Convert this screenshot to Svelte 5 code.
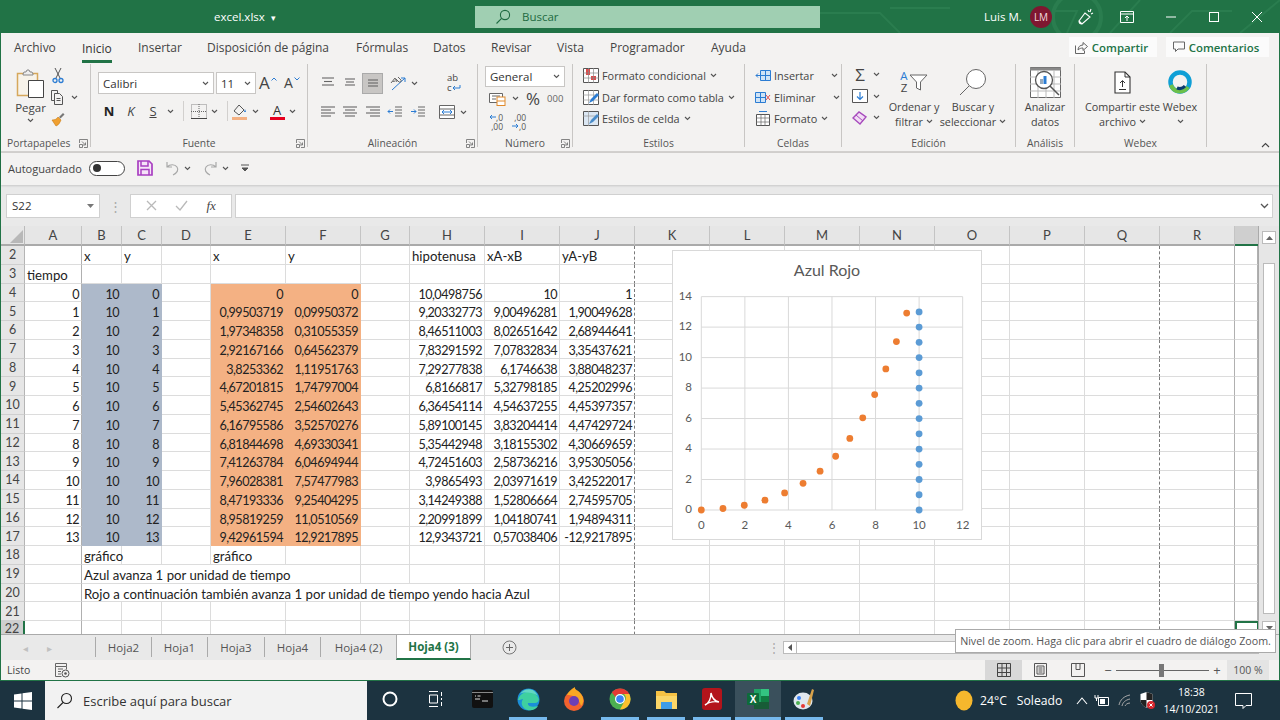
<script>
  const tabs = [['Archivo',68],['Inicio',56],['Insertar',69],['Disposición de página',149],['Fórmulas',77],['Datos',58],['Revisar',66],['Vista',53],['Programador',101],['Ayuda',60]];
  const cols = [['A',57],['B',40],['C',40],['D',49],['E',75],['F',75],['G',49],['H',75],['I',75],['J',75],['K',75],['L',75],['M',75],['N',75],['O',75],['P',75],['Q',75],['R',75],['S',23]];
  const tpl = '24px ' + cols.map(c => c[1] + 'px').join(' ');
  const num = [
    ['0','10','0','0','0','10,0498756','10','1'],
    ['1','10','1','0,99503719','0,09950372','9,20332773','9,00496281','1,90049628'],
    ['2','10','2','1,97348358','0,31055359','8,46511003','8,02651642','2,68944641'],
    ['3','10','3','2,92167166','0,64562379','7,83291592','7,07832834','3,35437621'],
    ['4','10','4','3,8253362','1,11951763','7,29277838','6,1746638','3,88048237'],
    ['5','10','5','4,67201815','1,74797004','6,8166817','5,32798185','4,25202996'],
    ['6','10','6','5,45362745','2,54602643','6,36454114','4,54637255','4,45397357'],
    ['7','10','7','6,16795586','3,52570276','5,89100145','3,83204414','4,47429724'],
    ['8','10','8','6,81844698','4,69330341','5,35442948','3,18155302','4,30669659'],
    ['9','10','9','7,41263784','6,04694944','4,72451603','2,58736216','3,95305056'],
    ['10','10','10','7,96028381','7,57477983','3,9865493','2,03971619','3,42522017'],
    ['11','10','11','8,47193336','9,25404295','3,14249388','1,52806664','2,74595705'],
    ['12','10','12','8,95819259','11,0510569','2,20991899','1,04180741','1,94894311'],
    ['13','10','13','9,42961594','12,9217895','12,9343721','0,57038406','-12,9217895']
  ];
  const numCols = ['A','B','C','E','F','H','I','J'];
  const text = {
    2: {B:'x',C:'y',E:'x',F:'y',H:'hipotenusa',I:'xA-xB',J:'yA-yB'},
    3: {A:'tiempo'},
    18: {B:'gráfico',E:'gráfico'},
    19: {B:'Azul avanza 1 por unidad de tiempo'},
    20: {B:'Rojo a continuación también avanza 1 por unidad de tiempo yendo hacia Azul'}
  };
  const spans = {19:{B:5},20:{B:8}};
  const rows = [];
  for (let r = 2; r <= 22; r++) {
    const cells = [];
    let skip = 0;
    for (const [c] of cols) {
      if (skip > 0) { skip--; continue; }
      let val = '', right = false, fill = '';
      if (r >= 4 && r <= 17) {
        const i = numCols.indexOf(c);
        if (i >= 0) { val = num[r-4][i]; right = true; }
        if (c === 'B' || c === 'C') fill = 'fb';
        if (c === 'E' || c === 'F') fill = 'fo';
      } else if (text[r] && text[r][c]) val = text[r][c];
      const span = (spans[r] && spans[r][c]) || 1;
      skip = span - 1;
      const last = cols[cols.findIndex(x => x[0] === c) + span - 1][0];
      cells.push({ c, val, right, fill, span, last });
    }
    rows.push({ r, cells });
  }
  const px = x => 29.3 + x * 21.78;
  const py = y => 260 - y * 15.24;
  const grid = { xs: [0,2,4,6,8,10,12], ys: [0,2,4,6,8,10,12,14] };
  const blueDots = Array.from({length:14}, (_, i) => [10, i]);
  const orangeDots = num.map(n => [parseFloat(n[3].replace(',','.')), parseFloat(n[4].replace(',','.'))]);
  const alignTop = [[[2,14,3],[4,12,6.5],[2,14,10]],[[3,13,4],[4,12,7],[3,13,10]],[[3,13,5],[3,13,8],[3,13,11]]];
  const alignBot = [[[1,15,3],[1,11,6],[1,15,9],[1,11,12]],[[1,15,3],[3,13,6],[1,15,9],[3,13,12]],[[1,15,3],[5,15,6],[1,15,9],[5,15,12]]];
  const sheets = [['Hoja2',56],['Hoja1',56],['Hoja3',57],['Hoja4',56],['Hoja4 (2)',76]];
</script>

{#snippet chev()}
  <svg class="chev" width="7" height="5" viewBox="0 0 7 5"><path d="M1 1l2.5 2.5L6 1" fill="none" stroke="#555" stroke-width="1.1"/></svg>
{/snippet}
{#snippet launch()}
  <svg class="launch" width="9" height="9" viewBox="0 0 9 9"><path d="M.5 4V.5h8v8H5M.5 5.5h3v3h-3zM3 2.500l3.500 3.500M6.500 3.500V6H4" fill="none" stroke="#777" stroke-width=".9"/></svg>
{/snippet}
{#snippet lines(r)}
  <svg width="16" height="16" viewBox="0 0 16 16">{#each r as l}<path d="M{l[0]} {l[2]}H{l[1]}" stroke="#666" stroke-width="1.1"/>{/each}</svg>
{/snippet}

<div class="page">
  <header class="title">
    <svg class="deco" width="460" height="33" viewBox="0 0 460 33" aria-hidden="true"><g fill="none" stroke="#2a7d4f" stroke-width="2"><circle cx="257" cy="17" r="24" stroke-width="4"/><path d="M235 11h22l-10 22M0 13h60l20 20M70 8h60M290 33l30-33M350 33l22-22h40M420 33l40-33"/></g></svg>
    <div class="fname">excel.xlsx <span class="caret">▾</span></div>
    <div class="search">
      <svg width="16" height="16" viewBox="0 0 16 16"><circle cx="10" cy="6" r="4.6" fill="none" stroke="#1e6a41" stroke-width="1.1"/><path d="M6.6 9.4L1.5 14.5" stroke="#1e6a41" stroke-width="1.1"/></svg>
      <span>Buscar</span>
    </div>
    <div class="user">Luis M.</div>
    <div class="avatar">LM</div>
    <svg class="pen" width="18" height="18" viewBox="0 0 18 18"><path d="M5 16l-3-3 6-8 5 4zM11 2l1 2M14 1l-1 3M16 5l-2 1M2 13c0 2 1 3 3 3" fill="none" stroke="#fff" stroke-width="1.1"/></svg>
    <svg class="rdo" width="14" height="12" viewBox="0 0 14 12"><path d="M.5.5h13v11H.5zM.5 3h13M7 10V5M5 7l2-2 2 2" fill="none" stroke="#fff"/></svg>
    <div class="wc"><svg width="12" height="12" viewBox="0 0 12 12"><path d="M1 6h10" stroke="#fff"/></svg></div>
    <div class="wc"><svg width="12" height="12" viewBox="0 0 12 12"><rect x="1.5" y="1.5" width="9" height="9" fill="none" stroke="#fff"/></svg></div>
    <div class="wc"><svg width="12" height="12" viewBox="0 0 12 12"><path d="M1 1l10 10M11 1L1 11" stroke="#fff"/></svg></div>
  </header>

  <div class="win">
    <nav class="tabs">
      {#each tabs as t, i}
        <div class="tab" class:on={i === 1} style:width="{t[1]}px"><span>{t[0]}</span></div>
      {/each}
      <button class="cbtn share"><svg width="13" height="13" viewBox="0 0 13 13"><path d="M.5 4.500v8h9v-3M3 9c0-3 2-5 5-5V1.500l4.500 4-4.500 4V7C6 7 4.500 7.500 3 9z" fill="none" stroke="#666"/></svg>Compartir</button>
      <button class="cbtn comm"><svg width="12" height="12" viewBox="0 0 12 12"><path d="M.5 1h11v7H5L2.500 10.500V8h-2z" fill="none" stroke="#666"/></svg>Comentarios</button>
    </nav>

    <section class="ribbon">
      <div class="g g1">
        <div class="gb clip">
          <div class="paste">
            <svg width="30" height="30" viewBox="0 0 30 30"><path d="M1.500 5.500h20v22h-20z" fill="#f7f3ea" stroke="#d6a85c" stroke-width="1.500"/><path d="M7 6l1-2h2l1-2h2l1 2h2l1 2v1H7z" fill="#eee" stroke="#888"/><path d="M12.500 12.500h15v17h-15z" fill="#fff" stroke="#444"/></svg>
            <span>Pegar</span>{@render chev()}
          </div>
          <div class="cliptools">
            <div class="ct"><svg width="12" height="17" viewBox="0 0 12 17"><path d="M3 1l5 10M9 1L4 11" stroke="#555"/><circle cx="3" cy="13.500" r="2" fill="none" stroke="#2b7cd3" stroke-width="1.300"/><circle cx="9" cy="13.500" r="2" fill="none" stroke="#2b7cd3" stroke-width="1.300"/></svg></div>
            <div class="ct"><svg width="16" height="16" viewBox="0 0 16 16"><path d="M4.500 11.500h-3v-10h6v3M4.500 4.500h5l3 3v8h-8zM6.500 9.500h4M6.500 11.500h4" fill="none" stroke="#555"/></svg><span class="sp"></span>{@render chev()}</div>
            <div class="ct"><svg width="16" height="16" viewBox="0 0 16 16"><path d="M9 6l4-4 1.500 1.500-4 4z" fill="#777"/><path d="M2 9c3 0 5-1 6-3l3 3c-1 2-2 5-5 6z" fill="#f0a030" stroke="#c77a10" stroke-width=".6"/></svg></div>
          </div>
        </div>
        <div class="gl"><span>Portapapeles</span>{@render launch()}</div>
      </div>

      <div class="g g2">
        <div class="gb col font">
          <div class="frow">
            <div class="combo w116"><span>Calibri</span>{@render chev()}</div>
            <div class="combo w40"><span>11</span>{@render chev()}</div>
            <div class="bigA"><span class="a1">A</span><svg class="car" width="6" height="4" viewBox="0 0 6 4"><path d="M.5 3.500L3 1l2.500 2.500" fill="none" stroke="#2b7cd3"/></svg></div>
            <div class="bigA"><span class="a2">A</span><svg class="car" width="6" height="4" viewBox="0 0 6 4"><path d="M.5.500L3 3 5.500.5" fill="none" stroke="#2b7cd3"/></svg></div>
          </div>
          <div class="frow r2">
            <b class="N">N</b><i class="K">K</i><u class="S">S</u>{@render chev()}
            <span class="vs a"></span>
            <svg class="bord" width="16" height="15" viewBox="0 0 16 15"><path d="M.5.5h15v14H.5z" fill="none" stroke="#888" stroke-dasharray="1 1"/><path d="M8 0v15M0 7.500h16" stroke="#666" stroke-dasharray="1 1"/><path d="M0 14.500h16" stroke="#444"/></svg>
            {@render chev()}
            <span class="vs b"></span>
            <svg class="fillc" width="16" height="17" viewBox="0 0 16 17"><path d="M2 8l5-6 5 5-5 5z" fill="none" stroke="#555"/><path d="M13 6l1 3h-2z" fill="#2b7cd3"/><path d="M0 14h15v3H0z" fill="#f4b183"/></svg>
            {@render chev()}
            <div class="redA"><span>A</span><i></i></div>
            {@render chev()}
          </div>
        </div>
        <div class="gl"><span>Fuente</span>{@render launch()}</div>
      </div>

      <div class="g g3">
        <div class="gb align">
          <div class="alcol">
            <div class="alrow">
              {#each alignTop as r, i}<div class="alb" class:sel={i === 2}>{@render lines(r)}</div>{/each}
              <svg class="orient" width="18" height="16" viewBox="0 0 18 16"><path d="M2 15L15 3M15 3h-4M15 3v4" stroke="#2b7cd3" fill="none"/><path d="M1 8l4-5 2 4M2.500 6.500l3-.5M8 2l3 3c1 1-1 3-2 2L6 4" fill="none" stroke="#666"/></svg>
              {@render chev()}
            </div>
            <div class="alrow">
              {#each alignBot as r}<div class="alb">{@render lines(r)}</div>{/each}
              <div class="alb"><svg width="16" height="16" viewBox="0 0 16 16"><path d="M8 3h7M8 6h7M8 9h7M8 12h7" stroke="#666"/><path d="M6 7.500H1M3 5.500l-2 2 2 2" stroke="#2b7cd3" fill="none"/></svg></div>
              <div class="alb"><svg width="16" height="16" viewBox="0 0 16 16"><path d="M8 3h7M8 6h7M8 9h7M8 12h7" stroke="#666"/><path d="M1 7.500h5M4 5.500l2 2-2 2" stroke="#2b7cd3" fill="none"/></svg></div>
            </div>
          </div>
          <div class="wrapcol">
            <div class="wrapab"><span>ab</span><span class="wc2">c<svg width="9" height="7" viewBox="0 0 9 7"><path d="M8 0v3H1M3 1L1 3l2 2" fill="none" stroke="#2b7cd3"/></svg></span></div>
            <div class="merge"><svg width="16" height="14" viewBox="0 0 16 14"><path d="M.5.500h15v13H.5zM.5 4h15M.5 10h15" fill="#fff" stroke="#666"/><path d="M3 7h10M5 5L3 7l2 2M11 5l2 2-2 2" fill="none" stroke="#2b7cd3"/></svg><span class="sp"></span>{@render chev()}</div>
          </div>
        </div>
        <div class="gl"><span>Alineación</span>{@render launch()}</div>
      </div>

      <div class="g g4">
        <div class="gb col numg">
          <div class="combo gen"><span>General</span>{@render chev()}</div>
          <div class="nrow">
            <svg class="acc" width="17" height="15" viewBox="0 0 17 15"><path d="M.5 2.500h13v9H.5z" fill="#fff" stroke="#666"/><path d="M3 5h8M3 8h4" stroke="#666"/><rect x="8" y="6" width="8" height="8.500" fill="#fff" stroke="#e08a2c"/><path d="M8 10h8" stroke="#e08a2c"/></svg>
            {@render chev()}
            <span class="pct">%</span><span class="mil">000</span>
          </div>
          <div class="nrow dec">
            <span class="dc"><span class="dl"><svg width="7" height="6" viewBox="0 0 7 6"><path d="M7 3H1M3 1L1 3l2 2" fill="none" stroke="#2b7cd3"/></svg>,0</span><span class="dl">,00</span></span>
            <span class="dc"><span class="dl">,00</span><span class="dl"><svg width="7" height="6" viewBox="0 0 7 6"><path d="M0 3h6M4 1l2 2-2 2" fill="none" stroke="#2b7cd3"/></svg>,0</span></span>
          </div>
        </div>
        <div class="gl"><span>Número</span>{@render launch()}</div>
      </div>

      <div class="g g5">
        <div class="gb col list">
          <div class="li"><svg width="16" height="15" viewBox="0 0 16 15"><path d="M.5.500h15v14H.5z" fill="#fff" stroke="#555"/><path d="M3 1h4v6H3zM8 8h5v4H8z" fill="#e04b4b"/><path d="M0 5h16M0 10h16M5.500 0v15M10.500 0v15" stroke="#888" stroke-width=".7"/></svg><span>Formato condicional</span>{@render chev()}</div>
          <div class="li"><svg width="16" height="15" viewBox="0 0 16 15"><path d="M.5.500h15v14H.5z" fill="#fff" stroke="#555"/><path d="M0 5h16M0 10h16M5.500 0v15M10.500 0v15" stroke="#999" stroke-width=".7"/><path d="M6 13l2-4 6-6 2 2-6 6z" fill="#2b7cd3"/></svg><span>Dar formato como tabla</span>{@render chev()}</div>
          <div class="li"><svg width="16" height="15" viewBox="0 0 16 15"><path d="M.5.500h15v14H.5z" fill="#dbe7f3" stroke="#555"/><path d="M0 5h16M5.500 0v15" stroke="#999" stroke-width=".7"/><path d="M6 13l2-4 6-6 2 2-6 6z" fill="#4a8cc9"/></svg><span>Estilos de celda</span>{@render chev()}</div>
        </div>
        <div class="gl"><span>Estilos</span></div>
      </div>

      <div class="g g6">
        <div class="gb col list">
          <div class="li"><svg width="16" height="15" viewBox="0 0 16 15"><path d="M5.500 2.500h10v10h-10z" fill="#cfe3f6" stroke="#2b7cd3"/><path d="M5 7.500h11M10.500 2v11" stroke="#2b7cd3"/><path d="M7 7.500H1M3 5.500l-2 2 2 2" fill="none" stroke="#2b7cd3"/></svg><span>Insertar</span><i class="sp14"></i>{@render chev()}</div>
          <div class="li"><svg width="16" height="15" viewBox="0 0 16 15"><path d="M.5 2.500h10v10H.5z" fill="#cfe3f6" stroke="#2b7cd3"/><path d="M0 7.500h11M5.500 2v11" stroke="#2b7cd3"/><path d="M11 5l4 5M15 5l-4 5" stroke="#e04b4b"/></svg><span>Eliminar</span><i class="sp14"></i>{@render chev()}</div>
          <div class="li"><svg width="16" height="15" viewBox="0 0 16 15"><path d="M1.500 3.500h13v11h-13z" fill="#fff" stroke="#555"/><path d="M1 7h14M1 11h14M6 3v12M10 3v12" stroke="#666" stroke-width=".7"/><path d="M4 .500h8" stroke="#2b7cd3"/></svg><span>Formato</span>{@render chev()}</div>
        </div>
        <div class="gl"><span>Celdas</span></div>
      </div>

      <div class="g g7">
        <div class="gb edit">
          <div class="edcol">
            <div class="ed"><span class="sig">Σ</span>{@render chev()}</div>
            <div class="ed"><svg width="16" height="14" viewBox="0 0 16 14"><path d="M.5.500h15v13H.5z" fill="#fff" stroke="#555"/><path d="M8 3v7M5 7.500l3 3 3-3" fill="none" stroke="#2b7cd3" stroke-width="1.200"/></svg>{@render chev()}</div>
            <div class="ed"><svg width="16" height="14" viewBox="0 0 16 14"><path d="M1 7l6-6 7 5-6 7z" fill="#f2dcf5" stroke="#a74bbd" stroke-width="1.400"/><path d="M4 4l7 6" stroke="#a74bbd"/></svg>{@render chev()}</div>
          </div>
          <div class="big sort">
            <div class="bi"><span class="az"><em>A</em>Z</span><svg width="19" height="17" viewBox="0 0 19 17"><path d="M1 1h17l-6.500 7v8l-4-2V8z" fill="#fff" stroke="#666"/></svg></div>
            <span>Ordenar y</span><span>filtrar {@render chev()}</span>
          </div>
          <div class="big find">
            <div class="bi"><svg width="28" height="28" viewBox="0 0 28 28"><circle cx="17" cy="11" r="9.500" fill="#fff" stroke="#666"/><path d="M10 18L1 27" stroke="#666"/></svg></div>
            <span>Buscar y</span><span>seleccionar {@render chev()}</span>
          </div>
        </div>
        <div class="gl"><span>Edición</span></div>
      </div>

      <div class="g g8">
        <div class="gb">
          <div class="big ana">
            <div class="bi"><svg width="31" height="31" viewBox="0 0 31 31"><path d="M.5.500h30v30H.5z" fill="#fff" stroke="#666"/><path d="M0 2h31" stroke="#888" stroke-width="3"/><path d="M0 10h31M0 17h31M0 24h31M8 3v28M16 3v28M24 3v28" stroke="#bbb"/><circle cx="14" cy="13" r="8.500" fill="#fff" stroke="#555" stroke-width="1.300"/><path d="M20 19l9 9" stroke="#555" stroke-width="1.500"/><path d="M10 12h3v5h-3z" fill="#9ab"/><path d="M13.500 9h3v8h-3z" fill="#2b7cd3"/></svg></div>
            <span>Analizar</span><span>datos</span>
          </div>
        </div>
        <div class="gl"><span>Análisis</span></div>
      </div>

      <div class="g g9">
        <div class="gb wbx">
          <div class="big cmp">
            <div class="bi"><svg width="17" height="23" viewBox="0 0 17 23"><path d="M1 1h10l5 5v16H1z" fill="#fff" stroke="#333" stroke-width="1.100"/><path d="M11 1v5h5" fill="none" stroke="#333"/><path d="M8.500 16V10M6 12l2.500-2.500L11 12M5 18.500h7" fill="none" stroke="#333"/></svg></div>
            <span>Compartir este</span><span>archivo {@render chev()}</span>
          </div>
          <div class="big web">
            <div class="bi"><svg width="24" height="24" viewBox="0 0 24 24"><circle cx="12" cy="12" r="9.500" fill="none" stroke="#0f9fd6" stroke-width="4.500"/><path d="M3 15a9.500 9.500 0 0 0 17 2" fill="none" stroke="#6cc04a" stroke-width="4"/><path d="M9 18a7 7 0 0 0 8-2" fill="none" stroke="#0b3a6e" stroke-width="3"/></svg></div>
            <span>Webex</span><span class="wch">{@render chev()}</span>
          </div>
        </div>
        <div class="gl"><span>Webex</span></div>
      </div>

      <div class="collapse"><svg width="9" height="6" viewBox="0 0 9 6"><path d="M1 5l3.500-3.500L8 5" fill="none" stroke="#444" stroke-width="1.100"/></svg></div>
    </section>

    <section class="qat">
      <span>Autoguardado</span>
      <div class="toggle"><i></i></div>
      <svg class="sv" width="16" height="16" viewBox="0 0 16 16"><path d="M1 1h11l3 3v11H1z" fill="#f6e3f8" stroke="#a83fc1" stroke-width="1.700"/><path d="M4 1v5h7V1M4 15V9.500h8V15" fill="none" stroke="#a83fc1" stroke-width="1.500"/></svg>
      <svg class="un" width="15" height="15" viewBox="0 0 15 15"><path d="M2 1v5h5M2 6c3-3 8-3 10 0s0 6-4 8" fill="none" stroke="#a8a8a8" stroke-width="1.200"/></svg>{@render chev()}
      <svg class="re" width="15" height="15" viewBox="0 0 15 15"><path d="M13 1v5H8M13 6c-3-3-8-3-10 0s0 6 4 8" fill="none" stroke="#a8a8a8" stroke-width="1.200"/></svg>{@render chev()}
      <svg class="cu" width="8" height="8" viewBox="0 0 8 8"><path d="M0 1h8M1 4l3 3 3-3z" stroke="#555" fill="#555"/></svg>
    </section>

    <section class="fbar">
      <div class="namebox"><span>S22</span><svg width="7" height="4" viewBox="0 0 7 4"><path d="M0 0h7L3.500 4z" fill="#777"/></svg></div>
      <div class="vdots">⋮</div>
      <div class="fbtns">
        <svg width="11" height="11" viewBox="0 0 11 11"><path d="M1 1l9 9M10 1l-9 9" stroke="#b9b9b9" stroke-width="1.300"/></svg>
        <svg width="13" height="11" viewBox="0 0 13 11"><path d="M1 6l4 4 7-9" fill="none" stroke="#b9b9b9" stroke-width="1.300"/></svg>
        <em>fx</em>
      </div>
      <div class="finput"><svg width="9" height="6" viewBox="0 0 9 6"><path d="M1 1l3.500 3.500L8 1" fill="none" stroke="#555" stroke-width="1.300"/></svg></div>
    </section>

    <section class="sheetwrap">
      <div class="sheet">
        <div class="grid" style:grid-template-columns={tpl}>
          <div class="corner"><svg width="16" height="16" viewBox="0 0 16 16"><path d="M15 2v13H2z" fill="#b8b8b8"/></svg></div>
          {#each cols as c}
            <div class="ch" class:sel={c[0] === 'S'}>{#if c[0] !== 'S'}<span>{c[0]}</span>{/if}</div>
          {/each}
          {#each rows as row}
            <div class="rh" class:sel={row.r === 22}><span>{row.r}</span></div>
            {#each row.cells as cell}
              <div
                class="cell {cell.fill}"
                class:right={cell.right}
                class:dash={cell.last === 'J' || cell.last === 'Q'}
                class:strong={cell.c === 'A' || cell.c === 'R' || cell.c === 'S'}
                class:active={cell.c === 'S' && row.r === 22}
                style:grid-column={cell.span > 1 ? `span ${cell.span}` : null}
              >{cell.val}</div>
            {/each}
          {/each}
        </div>
        <svg class="chart" width="310" height="290" viewBox="0 0 310 290">
          <rect x=".5" y=".5" width="309" height="289" fill="#fff" stroke="#d9d9d9"/>
          <text x="155" y="26" class="ct-title">Azul Rojo</text>
          {#each grid.xs as x}<path d="M{px(x)} {py(0)}V{py(14)}" stroke="#d9d9d9"/><text x={px(x)} y="279" class="ct-x">{x}</text>{/each}
          {#each grid.ys as y}<path d="M{px(0)} {py(y)}H{px(12)}" stroke="#d9d9d9"/><text x="20" y={py(y) + 3} class="ct-y">{y}</text>{/each}
          {#each blueDots as d}<circle cx={px(d[0])} cy={py(d[1])} r="3.400" fill="#5b9bd5"/>{/each}
          {#each orangeDots as d}<circle cx={px(d[0])} cy={py(d[1])} r="3.400" fill="#ed7d31"/>{/each}
        </svg>
      </div>
      <div class="vscroll">
        <div class="sb up"><svg width="7" height="4" viewBox="0 0 7 4"><path d="M0 4h7L3.500 0z" fill="#666"/></svg></div>
        <div class="vthumb"></div>
        <div class="sb dn"><svg width="7" height="4" viewBox="0 0 7 4"><path d="M0 0h7L3.500 4z" fill="#666"/></svg></div>
      </div>
    </section>

    <section class="sheettabs">
      <div class="arrows"><span>◂</span><span>▸</span></div>
      {#each sheets as s}<div class="stab" style:width="{s[1]}px">{s[0]}</div>{/each}
      <div class="stab curtab">Hoja4 (3)</div>
      <svg class="plus" width="15" height="15" viewBox="0 0 15 15"><circle cx="7.500" cy="7.500" r="6.500" fill="none" stroke="#777"/><path d="M7.500 4v7M4 7.500h7" stroke="#666"/></svg>
      <div class="split">⋮</div>
      <div class="hscroll"><div class="sb hl"><svg width="4" height="7" viewBox="0 0 4 7"><path d="M4 0v7L0 3.500z" fill="#555"/></svg></div><div class="hthumb"></div></div>
    </section>

    <section class="status">
      <span class="listo">Listo</span>
      <svg class="mac" width="15" height="15" viewBox="0 0 15 15"><path d="M.5.500h11v3H.5zM.5 3.500v10h6M11.500 3.500v3M3 6h5M3 8.500h3M3 11h3" fill="none" stroke="#666"/><circle cx="10.500" cy="10.500" r="3.500" fill="none" stroke="#555"/><circle cx="10.500" cy="10.500" r="1.300" fill="#555"/></svg>
      <div class="views">
        <div class="view on"><svg width="14" height="14" viewBox="0 0 14 14"><path d="M.5.500h13v13H.5zM.5 5h13M.5 9.500h13M5 .5v13M9.500 .5v13" fill="none" stroke="#444"/></svg></div>
        <div class="view"><svg width="13" height="14" viewBox="0 0 13 14"><path d="M.5.500h12v13H.5zM3 3h7v8H3zM4.500 5h4M4.500 7h4M4.500 9h4" fill="none" stroke="#555"/></svg></div>
        <div class="view"><svg width="14" height="14" viewBox="0 0 14 14"><path d="M.5.500h13v13H.5zM5 .5v6h4v-6" fill="none" stroke="#555"/></svg></div>
      </div>
      <div class="zoom">
        <span class="zs">−</span>
        <div class="track"><i></i></div>
        <span class="zs">+</span>
      </div>
      <div class="pctz">100 %</div>
    </section>
  </div>

  <footer class="taskbar">
    <div class="start"><svg width="18" height="18" viewBox="0 0 18 18"><path d="M0 2.500l7.500-1v7H0zM8.500 1.300L18 0v8.500H8.500zM0 9.500h7.500v7L0 15.500zM8.500 9.500H18V18l-9.500-1.300z" fill="#fff"/></svg></div>
    <div class="tsearch">
      <svg width="17" height="17" viewBox="0 0 17 17"><circle cx="10.500" cy="6.500" r="5" fill="none" stroke="#222" stroke-width="1.100"/><path d="M7 10.500L1.500 16" stroke="#222" stroke-width="1.100"/></svg>
      <span>Escribe aquí para buscar</span>
    </div>
    <div class="app"><div class="ai"><svg width="16" height="16" viewBox="0 0 16 16"><circle cx="8" cy="8" r="6.500" fill="none" stroke="#fff" stroke-width="2"/></svg></div><div class="bar off"></div></div>
    <div class="app"><div class="ai"><svg width="16" height="16" viewBox="0 0 16 16"><path d="M1 .5h9M1 15.500h9M1.500 4h8v8h-8zM13.500 1v4M13.500 7v2M13.500 11v4" fill="none" stroke="#fff"/></svg></div><div class="bar off"></div></div>
    <div class="app"><div class="ai"><svg width="21" height="18" viewBox="0 0 21 18"><rect width="21" height="18" rx="2" fill="#111"/><path d="M0 2.500h21" stroke="#888" stroke-width="1"/><path d="M3 6h1M5.500 6h3M3 9h5M10 11h6" stroke="#ddd"/></svg></div><div class="bar off"></div></div>
    <div class="app"><div class="ai"><svg width="23" height="23" viewBox="0 0 23 23"><circle cx="11.500" cy="11.500" r="11" fill="#1b8fd8"/><path d="M1 12C3 4 12 2 18 6s4 9 0 9h-7c-1 3 4 5 10 3-3 5-9 5-13 3-4-3-4-7-2-10-3 1-4 1-5 1z" fill="#3fd0a0"/><path d="M3 6c4-6 14-7 18 2-3-3-14-5-18-2z" fill="#62d7c4"/></svg></div><div class="bar"></div></div>
    <div class="app"><div class="ai"><svg width="22" height="24" viewBox="0 0 22 24"><circle cx="11" cy="14" r="10" fill="#f2622e"/><path d="M4 8c1-3 4-6 8-8-1 3 4 3 6 7 3 4 3 9 0 12-2-9-9-11-14-11z" fill="#f9a825"/><circle cx="11" cy="14" r="5" fill="#6c3fb5"/></svg></div><div class="bar off"></div></div>
    <div class="app"><div class="ai"><svg width="22" height="22" viewBox="0 0 22 22"><circle cx="11" cy="11" r="10.500" fill="#4caf50"/><path d="M11 .5a10.500 10.500 0 0 1 9.300 5.500H11a5 5 0 0 0-4.500 3L2.800 4.500A10.500 10.500 0 0 1 11 .5z" fill="#e53935"/><path d="M20.300 6A10.500 10.500 0 0 1 11 21.500l4.300-8A5 5 0 0 0 15 6z" fill="#fbc02d"/><circle cx="11" cy="11" r="5" fill="#fff"/><circle cx="11" cy="11" r="3.800" fill="#3b82f6"/></svg></div><div class="bar"></div></div>
    <div class="app"><div class="ai"><svg width="21" height="19" viewBox="0 0 21 19"><path d="M0 1h8l2 2h11v16H0z" fill="#f6c244"/><path d="M0 6h21v13H0z" fill="#fbd668"/><path d="M5 12h11v7H5z" fill="#3f9ce8"/></svg></div><div class="bar"></div></div>
    <div class="app"><div class="ai"><svg width="20" height="22" viewBox="0 0 20 22"><rect width="20" height="22" rx="3" fill="#b3141b"/><path d="M3 17c4-2 6-7 6-12 1 5 3 8 8 9-5-1-10 0-14 3z" fill="none" stroke="#fff" stroke-width="1.400"/></svg></div><div class="bar"></div></div>
    <div class="app runapp"><div class="ai"><svg width="23" height="22" viewBox="0 0 23 22"><path d="M7 1h15v20H7z" fill="#21a366"/><path d="M14 1h8v7h-8z" fill="#33c481"/><path d="M14 8h8v6h-8z" fill="#107c41"/><path d="M7 14h15v7H7z" fill="#185c37"/><rect y="5" width="12" height="12" rx="1" fill="#0e6b3a"/><text x="6" y="14.500" text-anchor="middle" font-size="10" font-weight="700" fill="#fff" font-family="'Liberation Sans',sans-serif">X</text></svg></div><div class="bar"></div></div>
    <div class="app"><div class="ai"><svg width="22" height="24" viewBox="0 0 22 24"><ellipse cx="10" cy="14" rx="9.500" ry="8.500" fill="#dfe7ee"/><circle cx="6" cy="11" r="2" fill="#3b82f6"/><circle cx="5" cy="16" r="2" fill="#4caf50"/><circle cx="10" cy="19" r="2" fill="#e53935"/><path d="M14 17l5-15 2 1-4 16z" fill="#d8a24a"/></svg></div><div class="bar"></div></div>
    <div class="tray">
      <svg class="sun" width="18" height="21" viewBox="0 0 18 21"><ellipse cx="9" cy="10.500" rx="8.500" ry="10" fill="#f5b72d"/></svg>
      <span class="temp">24°C</span><span class="sol">Soleado</span>
      <svg class="trayup" width="12" height="8" viewBox="0 0 12 8"><path d="M1 7l5-6 5 6" fill="none" stroke="#fff" stroke-width="1.100"/></svg>
      <svg class="batt" width="15" height="14" viewBox="0 0 15 14"><path d="M4.500 3.500h10v8h-10z" fill="none" stroke="#fff"/><path d="M6 5h5v5H6z" fill="#fff"/><path d="M1 1v3h3V1M2.500 4v3" stroke="#fff" fill="none"/></svg>
      <svg class="wifi" width="13" height="13" viewBox="0 0 13 13"><path d="M1 11C2 6 6 2 12 1M4 12c.5-3 3-6 8-7M7 12c.5-1 2-3 5-3" fill="none" stroke="#aaa"/></svg>
      <svg class="shield" width="15" height="17" viewBox="0 0 15 17"><path d="M6.500 0l6 2v6c0 4-3 6-6 8-3-2-6-4-6-8V2z" fill="#fff"/><path d="M6.500 0v8h6V2zM.5 8h6v8c-3-2-6-4-6-8z" fill="#222"/><circle cx="11" cy="13" r="4" fill="#d9272e"/><path d="M9.500 11.500l3 3M12.500 11.500l-3 3" stroke="#fff"/></svg>
      <div class="clock"><span>18:38</span><span>14/10/2021</span></div>
      <svg class="notif" width="17" height="16" viewBox="0 0 17 16"><path d="M.5.500h16v12H11l-3 3v-3H.5z" fill="none" stroke="#fff"/></svg>
    </div>
  </footer>

  <div class="tooltip">Nivel de zoom. Haga clic para abrir el cuadro de diálogo Zoom.</div>
</div>

<style>
  :global(body) { margin: 0; }
  .page { position: relative; width: 1280px; height: 720px; overflow: hidden; display: flex; flex-direction: column; font-family: "Open Sans", "Noto Sans", sans-serif; font-size: 11px; color: #444; background: #f3f2f1; }
  svg { flex: none; display: block; }
  button { font: inherit; border: 0; padding: 0; }

  .title { position: relative; height: 33px; flex: none; background: #217346; display: flex; align-items: center; color: #fff; }
  .deco { position: absolute; left: 820px; top: 0; }
  .fname { position: relative; margin-left: 214px; width: 261px; font-size: 11.500px; color: #fff; }
  .caret { margin-left: 3px; font-size: 9px; }
  .search { position: relative; width: 345px; height: 22px; background: #a0cfb2; display: flex; align-items: center; color: #1e6a41; font-size: 11.500px; box-sizing: border-box; padding-left: 20px; gap: 11px; }
  .user { position: relative; margin-left: 164px; width: 46px; font-size: 11.500px; }
  .avatar { position: relative; width: 22px; height: 22px; border-radius: 50%; background: #7f1730; color: #f3d9de; font-size: 10px; display: flex; align-items: center; justify-content: center; }
  .pen { position: relative; margin-left: 25px; }
  .rdo { position: relative; margin-left: 25px; }
  .wc { position: relative; width: 43px; display: flex; justify-content: center; }
  .rdo + .wc { margin-left: 15px; }

  .win { flex: none; height: 648px; border: 1px solid #217346; border-width: 0 1px 1px; display: flex; flex-direction: column; box-sizing: border-box; }

  .tabs { height: 31px; flex: none; display: flex; align-items: stretch; padding-left: 13px; font-size: 12px; color: #444; }
  .tab { display: flex; align-items: center; box-sizing: border-box; padding-bottom: 2px; }
  .tab span { position: relative; white-space: nowrap; line-height: 26px; }
  .tab.on span { color: #333; border-bottom: 3px solid #217346; line-height: 23px; margin-top: 5px; }
  .cbtn { height: 20px; margin-top: 4px; background: #fbfbfb; display: flex; align-items: center; color: #217346; font-size: 11.400px; font-weight: 600; box-sizing: border-box; gap: 4px; justify-content: center; }
  .share { width: 88px; margin-left: 298px; padding-right: 3px; }
  .comm { width: 103px; margin-left: 9px; padding-right: 3px; }

  .ribbon { height: 87px; flex: none; display: flex; border-bottom: 2px solid #d2d0ce; position: relative; }
  .g { display: flex; flex-direction: column; height: 83px; box-sizing: border-box; border-right: 1px solid #c8c6c4; position: relative; }
  .gb { height: 71px; flex: none; display: flex; box-sizing: border-box; }
  .col { flex-direction: column; }
  .gl { height: 14px; flex: none; display: flex; align-items: center; justify-content: center; font-size: 10.300px; color: #555; position: relative; white-space: nowrap; margin-top: 1px; }
  .launch { position: absolute; right: 2px; top: 3px; }
  .g1 { width: 90px; } .g2 { width: 217px; } .g3 { width: 170px; } .g4 { width: 95px; } .g5 { width: 172px; } .g6 { width: 97px; } .g7 { width: 174px; } .g8 { width: 59px; } .g9 { width: 132px; }
  .g1 .gl { justify-content: flex-start; padding-left: 6px; }
  .sp { width: 5px; }

  .clip { padding-left: 13px; }
  .paste { width: 33px; display: flex; flex-direction: column; align-items: center; padding-top: 4px; }
  .paste span { margin-top: 2px; font-size: 11.500px; line-height: 15px; }
  .paste .chev { margin-top: 3px; }
  .cliptools { display: flex; flex-direction: column; }
  .ct { height: 22px; display: flex; align-items: center; padding-left: 3px; }
  .ct:nth-child(1) { padding-left: 5px; }

  .font { padding: 8px 0 0 7px; }
  .frow { display: flex; align-items: center; height: 22px; flex: none; gap: 2px; }
  .r2 { margin-top: 6px; gap: 0; }
  .combo { height: 22px; background: #fff; border: 1px solid #c8c6c4; box-sizing: border-box; display: flex; align-items: center; justify-content: space-between; padding: 0 4px; font-size: 11.500px; color: #333; flex: none; }
  .w116 { width: 116px; } .w40 { width: 40px; }
  .bigA { width: 22px; margin-left: 1px; position: relative; display: flex; align-items: flex-start; gap: 1px; color: #444; line-height: 20px; }
  .bigA .car { margin-top: 4px; }
  .a1 { font-size: 17px; } .a2 { font-size: 14px; }
  .N { font-size: 13px; width: 22px; text-align: center; color: #222; }
  .K { font-size: 13px; width: 22px; text-align: center; font-style: italic; color: #444; }
  .S { font-size: 13px; width: 20px; text-align: center; color: #444; margin-left: 1px; }
  .r2 .chev { margin-left: 4px; }
  .vs { width: 1px; height: 20px; background: #d2d0ce; margin: 0 7px 0 9px; }
  .vs.b { margin-right: 4px; }
  .redA { width: 16px; margin-left: 10px; display: flex; flex-direction: column; align-items: center; font-size: 13px; line-height: 14px; color: #333; }
  .redA i { width: 15px; height: 3px; background: #e6001f; }

  .align { padding: 8px 0 0 9px; }
  .alcol { width: 121px; }
  .alrow { display: flex; align-items: center; height: 22px; margin-bottom: 7px; }
  .alb { width: 21px; height: 21px; margin-right: 1.500px; display: flex; align-items: center; justify-content: center; box-sizing: border-box; }
  .alb.sel { background: #c8c6c4; border: 1px solid #aaa; }
  .orient { margin-left: 5px; margin-right: 3px; }
  .wrapcol { display: flex; flex-direction: column; padding-left: 1px; }
  .wrapab { height: 22px; font-size: 9.500px; line-height: 10px; color: #444; padding: 1px 0 0 8px; display: flex; flex-direction: column; box-sizing: border-box; }
  .wc2 { display: flex; align-items: center; }
  .merge { display: flex; align-items: center; height: 22px; margin-top: 7px; }

  .numg { padding: 2px 0 0 7px; }
  .gen { width: 80px; height: 21px; }
  .nrow { display: flex; align-items: center; height: 23px; flex: none; padding-left: 4px; }
  .acc { margin-right: 6px; }
  .pct { font-size: 17px; margin-left: 7px; color: #444; }
  .mil { font-size: 9.500px; margin-left: 7px; color: #666; }
  .dec { gap: 9px; font-size: 8.500px; line-height: 9px; color: #555; }
  .dc { display: flex; flex-direction: column; align-items: flex-end; }
  .dl { display: flex; align-items: center; }

  .list { padding-left: 10px; }
  .li { height: 21.500px; display: flex; align-items: center; white-space: nowrap; gap: 3px; font-size: 10.900px; color: #444; }
  .li:first-child { margin-top: 1px; }
  .li .chev { margin-left: 1px; }
  .sp14 { width: 10px; }

  .edit { padding-left: 10px; }
  .edcol { width: 32px; }
  .ed { height: 21.500px; display: flex; align-items: center; gap: 5px; }
  .sig { font-size: 17px; width: 16px; line-height: 20px; text-align: center; color: #444; }
  .big { display: flex; flex-direction: column; align-items: center; font-size: 10.800px; line-height: 15px; white-space: nowrap; color: #444; }
  .big span { display: flex; align-items: center; gap: 3px; }
  .bi { height: 34px; display: flex; align-items: center; justify-content: center; margin-top: 1px; }
  .sort { width: 66px; margin-left: -3px; }
  .big .az { flex-direction: column; font-size: 11.500px; line-height: 12px; margin-right: 1px; gap: 0; }
  .az em { color: #2b7cd3; font-style: normal; }
  .find { width: 70px; margin-left: -9px; }
  .ana { width: 59px; }
  .wbx { padding-left: 5px; }
  .cmp { width: 85px; }
  .web { width: 32px; margin-left: -1px; }
  .wch { height: 15px; }
  .collapse { position: absolute; right: 9px; top: 78px; }

  .qat { height: 32px; flex: none; display: flex; align-items: center; padding: 0 0 2px 7px; box-sizing: border-box; font-size: 11px; color: #444; box-shadow: 0 1px 2px rgba(0,0,0,.15); position: relative; }
  .toggle { width: 36px; height: 15px; margin-left: 7px; border: 1px solid #444; border-radius: 8px; box-sizing: border-box; background: #fff; display: flex; align-items: center; padding-left: 3px; }
  .toggle i { width: 8px; height: 8px; border-radius: 50%; background: #333; }
  .sv { margin-left: 12px; }
  .un { margin-left: 12px; } .re { margin-left: 12px; }
  .qat .chev { margin-left: 4px; }
  .cu { margin-left: 12px; }

  .fbar { height: 41px; flex: none; background: #e9e9e9; display: flex; align-items: center; }
  .namebox { width: 94px; height: 24px; margin-left: 5px; background: #fff; border: 1px solid #d0d0d0; box-sizing: border-box; display: flex; align-items: center; justify-content: space-between; padding: 0 5px; font-size: 11.500px; color: #333; }
  .vdots { width: 30px; text-align: center; color: #aaa; font-size: 13px; }
  .fbtns { width: 102px; height: 24px; background: #fff; border: 1px solid #d0d0d0; box-sizing: border-box; display: flex; align-items: center; justify-content: space-around; padding: 0 6px; }
  .fbtns em { font-family: "Liberation Serif", serif; font-size: 13px; color: #444; }
  .finput { width: 1038px; height: 24px; margin-left: 3px; background: #fff; border: 1px solid #d0d0d0; box-sizing: border-box; display: flex; align-items: center; justify-content: flex-end; padding-right: 3px; }

  .sheetwrap { height: 408px; flex: none; display: flex; background: #fff; }
  .sheet { position: relative; width: 1257px; overflow: hidden; flex: none; }
  .grid { display: grid; grid-template-rows: 20px repeat(21, 18.750px); font-family: Lato, "Open Sans", sans-serif; font-size: 13.200px; color: #222; }
  .corner { background: #e6e6e6; border-right: 1px solid #bbb; border-bottom: 2px solid #aaa; box-sizing: border-box; display: flex; align-items: flex-end; justify-content: flex-end; }
  .ch { background: #e6e6e6; border-right: 1px solid #c4c4c4; border-bottom: 2px solid #aaa; box-sizing: border-box; display: flex; align-items: center; justify-content: center; color: #444; font-size: 13px; }
  .ch.sel { background: #cfcfcf; border-bottom-color: #217346; border-right: 0; }
  .rh { background: #e6e6e6; border-right: 1px solid #b5b5b5; border-bottom: 1px solid #cfcfcf; box-sizing: border-box; display: flex; align-items: center; justify-content: center; color: #444; font-size: 12.500px; overflow: hidden; }
  .rh.sel { background: #cfcfcf; border-right: 2px solid #217346; align-items: flex-start; }
  .cell { border-right: 1px solid #dcdcdc; border-bottom: 1px solid #dcdcdc; box-sizing: border-box; padding: 0 2px; line-height: 20px; white-space: nowrap; }
  .right { text-align: right; font-size: 12.600px; letter-spacing: -.5px; padding-right: 2px; line-height: 21px; }
  .strong { border-right-color: #b0b0b0; }
  .dash { border-right: 1px dashed #7a7a7a; }
  .fb { background: #adb9ca; border-color: #adb9ca; }
  .fo { background: #f4b183; border-color: #f4b183; }
  .active { border: 2px solid #217346; border-right-width: 1px; border-bottom: 0; }
  .chart { position: absolute; left: 671px; top: 24px; font-family: Lato, sans-serif; }
  .ct-title { text-anchor: middle; font-size: 16px; fill: #595959; }
  .ct-x { text-anchor: middle; font-size: 11.500px; fill: #595959; }
  .ct-y { text-anchor: end; font-size: 11.500px; fill: #595959; }

  .vscroll { flex: 1; background: #e6e6e6; border-left: 1px solid #aaa; display: flex; flex-direction: column; align-items: center; padding: 5px 0 0; box-sizing: border-box; }
  .sb { background: #fff; border: 1px solid #bbb; box-sizing: border-box; display: flex; align-items: center; justify-content: center; flex: none; }
  .up, .dn { width: 14px; height: 13px; }
  .vthumb { width: 12px; flex: 1; background: #fff; border: 1px solid #bbb; box-sizing: border-box; margin: 19px 0 7px; }

  .sheettabs { height: 26px; flex: none; background: #e9e9e9; border-top: 1px solid #aaa; box-sizing: border-box; display: flex; align-items: center; font-size: 11.500px; color: #555; }
  .arrows { width: 94px; display: flex; gap: 19px; padding-left: 22px; box-sizing: border-box; color: #c0c0c0; font-size: 10px; }
  .stab { height: 20px; display: flex; align-items: center; justify-content: center; border-left: 1px solid #aaa; box-sizing: border-box; margin-top: -1px; white-space: nowrap; }
  .curtab { width: 75px; height: 25px; background: #fff; color: #217346; font-weight: 700; border: 1px solid #aaa; border-width: 0 1px; border-bottom: 2px solid #217346; }
  .plus { margin-left: 31px; }
  .split { margin-left: 251px; width: 10px; color: #aaa; }
  .hscroll { width: 476px; height: 13px; margin-left: 5px; background: #d8d8d8; border: 1px solid #bbb; box-sizing: border-box; display: flex; align-items: center; }
  .hl { width: 13px; height: 11px; border-width: 0 1px 0 0; }
  .hthumb { width: 424px; height: 11px; background: #fff; }

  .status { height: 20px; flex: none; display: flex; align-items: center; font-size: 10.500px; color: #444; }
  .listo { margin-left: 6px; width: 48px; }
  .views { margin-left: 915px; display: flex; align-items: stretch; height: 100%; }
  .view { width: 37px; display: flex; align-items: center; justify-content: center; }
  .view.on { background: #d8d8d8; }
  .zoom { display: flex; align-items: center; margin-left: 8px; }
  .zs { width: 8px; text-align: center; font-size: 13px; color: #555; }
  .track { width: 93px; height: 1px; background: #666; margin: 0 4px; position: relative; }
  .track i { position: absolute; left: 43px; top: -6px; width: 5px; height: 13px; background: #777; }
  .pctz { margin-left: 6px; width: 42px; height: 100%; background: #e4e4e4; display: flex; align-items: center; justify-content: center; font-size: 10.500px; color: #555; }

  .taskbar { flex: 1; background: #1c3340; display: flex; align-items: stretch; color: #fff; }
  .start { width: 45px; display: flex; align-items: center; justify-content: center; }
  .tsearch { width: 322px; background: #f2f2f2; display: flex; align-items: center; gap: 10px; padding-left: 11px; box-sizing: border-box; color: #333; font-size: 13px; }
  .app { width: 46px; display: flex; flex-direction: column; }
  .runapp { background: #3a505c; }
  .ai { flex: 1; display: flex; align-items: center; justify-content: center; }
  .bar { height: 3px; margin: 0 4px; background: #76b9ed; }
  .runapp .bar { margin: 0; }
  .bar.off { background: transparent; }
  .tray { flex: 1; display: flex; align-items: center; position: relative; font-size: 13px; }
  .sun { margin-left: 128px; }
  .temp { margin-left: 7px; font-size: 12.200px; }
  .sol { margin-left: 10px; font-size: 12.200px; }
  .trayup { margin-left: 14px; }
  .batt { margin-left: 6px; }
  .wifi { margin-left: 9px; }
  .shield { margin-left: 9px; }
  .clock { margin-left: 5px; width: 62px; display: flex; flex-direction: column; align-items: center; font-size: 10.500px; line-height: 17px; }
  .notif { margin-left: 13px; }

  .tooltip { position: absolute; left: 955px; top: 629px; width: 321px; height: 24px; background: #fff; border: 1px solid #aaa; box-sizing: border-box; display: flex; align-items: center; justify-content: center; font-size: 10.700px; color: #555; white-space: nowrap; }
</style>
